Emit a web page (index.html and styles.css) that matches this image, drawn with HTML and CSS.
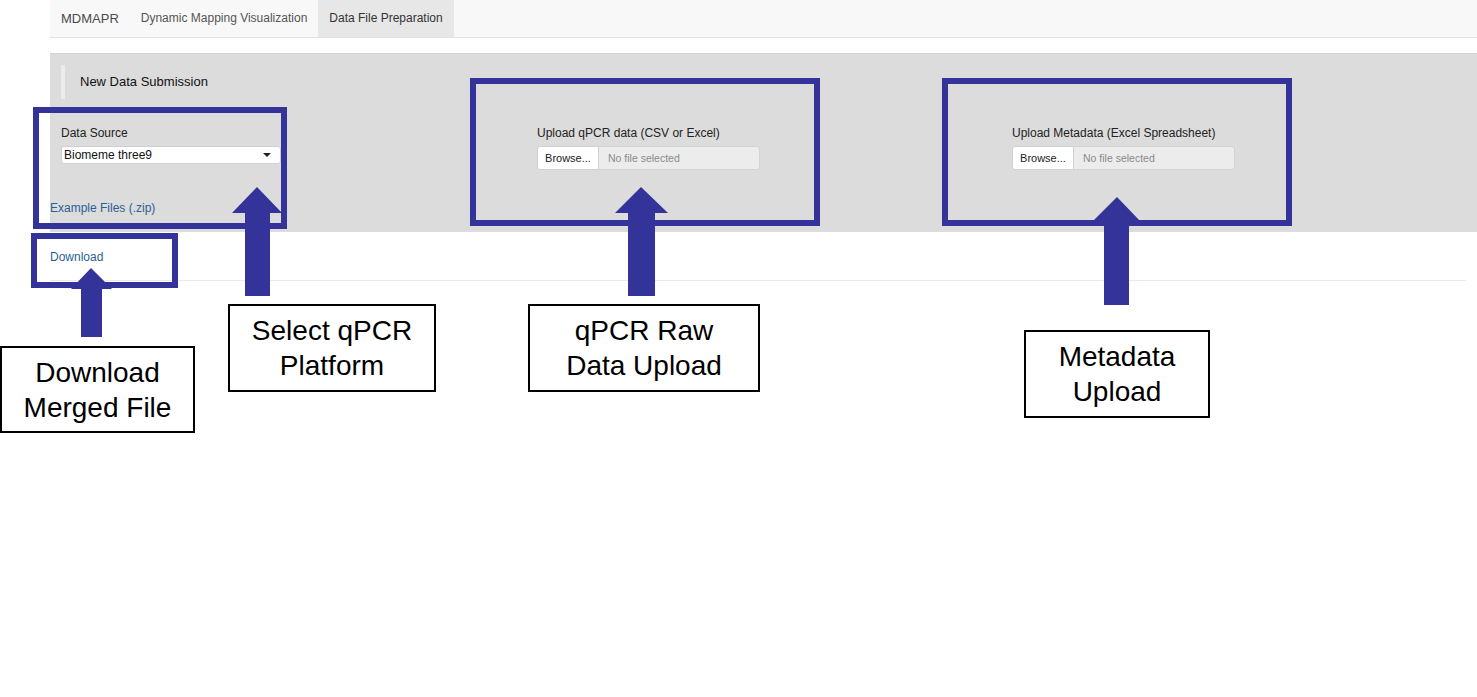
FILE: index.html
```html
<!DOCTYPE html>
<html>
<head>
<meta charset="utf-8">
<title>MDMAPR</title>
<link rel="stylesheet" href="styles.css">
</head>
<body>
<div class="page">
  <nav class="navbar">
    <span class="brand">MDMAPR</span>
    <span class="tab">Dynamic Mapping Visualization</span>
    <span class="tab active">Data File Preparation</span>
  </nav>

  <section class="well">
    <div class="well-title">New Data Submission</div>
    <div class="well-row">
      <div class="col">
        <div class="label">Data Source</div>
        <div class="select"><span>Biomeme three9</span><span class="caret"></span></div>
      </div>
      <div class="col">
        <div class="label">Upload qPCR data (CSV or Excel)</div>
        <div class="file"><span class="browse">Browse...</span><span class="fname">No file selected</span></div>
      </div>
      <div class="col">
        <div class="label">Upload Metadata (Excel Spreadsheet)</div>
        <div class="file"><span class="browse">Browse...</span><span class="fname">No file selected</span></div>
      </div>
    </div>
    <a class="link example">Example Files (.zip)</a>
  </section>

  <div class="below">
    <a class="link">Download</a>
    <div class="rule"></div>
  </div>
</div>

<div class="annotations">
  <div class="hl hl-source"></div>
  <div class="hl hl-qpcr"></div>
  <div class="hl hl-meta"></div>
  <div class="hl hl-download"></div>

  <svg class="arrows" width="1477" height="697" viewBox="0 0 1477 697">
    <polygon fill="#333399" points="257,187 282,213 270,213 270,296 245,296 245,213 232,213"/>
    <polygon fill="#333399" points="641,187 668,213 655,213 655,296 628,296 628,213 615,213"/>
    <polygon fill="#333399" points="1117,197 1140,221 1129,221 1129,305 1104,305 1104,221 1093,221"/>
    <polygon fill="#333399" points="91,268 112,289 102,289 102,337 81,337 81,289 71,289"/>
  </svg>

  <div class="note note-download">Download<br>Merged File</div>
  <div class="note note-select">Select qPCR<br>Platform</div>
  <div class="note note-raw">qPCR Raw<br>Data Upload</div>
  <div class="note note-meta">Metadata<br>Upload</div>
</div>
</body>
</html>
```

FILE: styles.css
```css
* { box-sizing: border-box; }

html, body {
  margin: 0;
  padding: 0;
  background: #ffffff;
  font-family: "Liberation Sans", Arial, sans-serif;
  color: #333;
}

body {
  position: relative;
  width: 1477px;
  height: 697px;
  overflow: hidden;
}

.page {
  margin-left: 50px;
}

/* navbar */
.navbar {
  display: flex;
  height: 38px;
  background: #f8f8f8;
  border-bottom: 1px solid #e2e2e2;
  align-items: stretch;
}
.brand {
  padding: 0 11px;
  font-size: 13px;
  color: #4a4a4a;
  line-height: 37px;
}
.tab {
  padding: 0 11px;
  font-size: 12px;
  color: #555;
  line-height: 37px;
}
.tab.active {
  background: #e7e7e7;
  color: #333;
}

/* well */
.well {
  margin-top: 15px;
  background: #dcdcdc;
  border-top: 1px solid #d2d2d2;
  padding: 11px 0 16px;
}
.well-title {
  margin-left: 11px;
  border-left: 4px solid #ececec;
  height: 34px;
  line-height: 34px;
  padding-left: 15px;
  font-size: 13px;
  color: #111;
}
.well-row {
  display: flex;
  margin-top: 26px;
  padding-left: 11px;
}
.col {
  width: 476px;
  flex: none;
}
.col + .col + .col {
  margin-left: -1px;
}
.label {
  font-size: 12px;
  line-height: 16px;
  color: #222;
  margin-bottom: 5px;
}
.select {
  width: 220px;
  height: 18px;
  background: #fff;
  border: 1px solid #cfcfcf;
  border-radius: 3px;
  display: flex;
  align-items: center;
  justify-content: space-between;
  padding: 0 9px 0 2px;
  font-size: 12px;
  color: #111;
}
.caret {
  width: 0;
  height: 0;
  border-left: 4px solid transparent;
  border-right: 4px solid transparent;
  border-top: 4px solid #222;
}
.file {
  display: flex;
  width: 223px;
  height: 24px;
  margin-top: 1px;
}
.browse {
  width: 62px;
  flex: none;
  background: #fff;
  border: 1px solid #d0d0d0;
  border-radius: 3px 0 0 3px;
  font-size: 11px;
  color: #222;
  line-height: 22px;
  text-align: center;
}
.fname {
  flex: 1;
  background: #ececec;
  border: 1px solid #d3d3d3;
  border-left: none;
  border-radius: 0 3px 3px 0;
  font-size: 10.5px;
  color: #8a8a8a;
  line-height: 22px;
  padding-left: 9px;
}
.link {
  font-size: 12px;
  line-height: 16px;
  color: #2b5f94;
  text-decoration: none;
  display: block;
}
.example {
  margin-top: 30px;
}

.below {
  padding-top: 17px;
}
.rule {
  margin-top: 15px;
  margin-right: 11px;
  border-top: 1px solid #eaeaea;
}

/* annotation overlay */
.annotations {
  position: absolute;
  left: 0;
  top: 0;
  width: 1477px;
  height: 697px;
  pointer-events: none;
}
.arrows {
  position: absolute;
  left: 0;
  top: 0;
}
.hl {
  position: absolute;
  border: 6px solid #333399;
}
.hl-source { left: 33px; top: 107px; width: 254px; height: 122px; }
.hl-qpcr { left: 470px; top: 78px; width: 350px; height: 148px; }
.hl-meta { left: 942px; top: 78px; width: 350px; height: 148px; }
.hl-download { left: 31px; top: 233px; width: 147px; height: 55px; }

.note {
  position: absolute;
  background: #fff;
  border: 2px solid #000;
  display: flex;
  align-items: center;
  justify-content: center;
  text-align: center;
  font-size: 28px;
  line-height: 35px;
  color: #000;
}
.note-download { left: 0; top: 346px; width: 195px; height: 87px; }
.note-select { left: 228px; top: 304px; width: 208px; height: 88px; }
.note-raw { left: 528px; top: 304px; width: 232px; height: 88px; }
.note-meta { left: 1024px; top: 330px; width: 186px; height: 88px; }
```
